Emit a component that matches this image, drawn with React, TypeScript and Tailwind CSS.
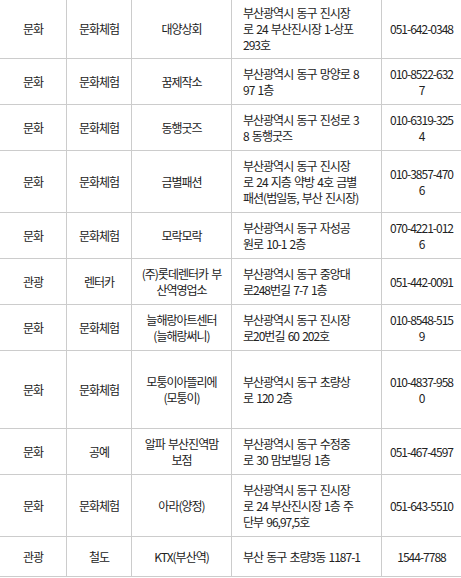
import React from 'react';

type Row = {
  type: string;
  category: string;
  name: string[];
  address: string[];
  phone: string[];
  height: string;
};

const rows: Row[] = [
  { type: '문화', category: '문화체험', name: ['대양상회'], address: ['부산광역시 동구 진시장', '로 24 부산진시장 1-상포', '293호'], phone: ['051-642-0348'], height: 'h-[59px]' },
  { type: '문화', category: '문화체험', name: ['꿈제작소'], address: ['부산광역시 동구 망양로 8', '97 1층'], phone: ['010-8522-632', '7'], height: 'h-[46px]' },
  { type: '문화', category: '문화체험', name: ['동행굿즈'], address: ['부산광역시 동구 진성로 3', '8 동행굿즈'], phone: ['010-6319-325', '4'], height: 'h-[46px]' },
  { type: '문화', category: '문화체험', name: ['금별패션'], address: ['부산광역시 동구 진시장', '로 24 지층 약방 4호 금별', '패션(범일동, 부산 진시장)'], phone: ['010-3857-470', '6'], height: 'h-[62px]' },
  { type: '문화', category: '문화체험', name: ['모락모락'], address: ['부산광역시 동구 자성공', '원로 10-1 2층'], phone: ['070-4221-012', '6'], height: 'h-[46px]' },
  { type: '관광', category: '렌터카', name: ['(주)롯데렌터카 부', '산역영업소'], address: ['부산광역시 동구 중앙대', '로248번길 7-7 1층'], phone: ['051-442-0091'], height: 'h-[46px]' },
  { type: '문화', category: '문화체험', name: ['늘해랑아트센터', '(늘해랑써니)'], address: ['부산광역시 동구 진시장', '로20번길 60 202호'], phone: ['010-8548-515', '9'], height: 'h-[46px]' },
  { type: '문화', category: '문화체험', name: ['모퉁이아뜰리에', '(모퉁이)'], address: ['부산광역시 동구 초량상', '로 120 2층'], phone: ['010-4837-958', '0'], height: 'h-[78px]' },
  { type: '문화', category: '공예', name: ['알파 부산진역맘', '보점'], address: ['부산광역시 동구 수정중', '로 30 맘보빌딩 1층'], phone: ['051-467-4597'], height: 'h-[46px]' },
  { type: '문화', category: '문화체험', name: ['아라(양정)'], address: ['부산광역시 동구 진시장', '로 24 부산진시장 1층 주', '단부 96,97,5호'], phone: ['051-643-5510'], height: 'h-[62px]' },
  { type: '관광', category: '철도', name: ['KTX(부산역)'], address: ['부산 동구 초량3동 1187-1'], phone: ['1544-7788'], height: 'h-[40px]' },
];

const Lines: React.FC<{ lines: string[] }> = ({ lines }) => (
  <div>
    {lines.map((l, i) => (
      <div key={i} className="whitespace-pre">{l}</div>
    ))}
  </div>
);

const App: React.FC = () => {
  return (
    <div
      className="w-[461px] bg-white text-[#222] text-[12px] leading-[16px] tracking-[-1px] [word-spacing:1.5px]"
      style={{ fontFamily: '"Noto Sans CJK KR", sans-serif' }}
    >
      {rows.map((r, i) => (
        <div key={i} className={`flex border-b border-[#cccccc] ${r.height}`}>
          <div className="w-[67px] shrink-0 border-r border-[#cccccc] flex items-center justify-center">
            {r.type}
          </div>
          <div className="w-[65px] shrink-0 border-r border-[#cccccc] flex items-center justify-center">
            {r.category}
          </div>
          <div className="w-[100px] shrink-0 border-r border-[#cccccc] flex items-center justify-center text-center">
            <Lines lines={r.name} />
          </div>
          <div className="w-[150px] shrink-0 border-r border-[#cccccc] flex items-center pl-[11px]">
            <Lines lines={r.address} />
          </div>
          <div className="w-[79px] shrink-0 flex items-center justify-center text-center">
            <Lines lines={r.phone} />
          </div>
        </div>
      ))}
    </div>
  );
};

export default App;
